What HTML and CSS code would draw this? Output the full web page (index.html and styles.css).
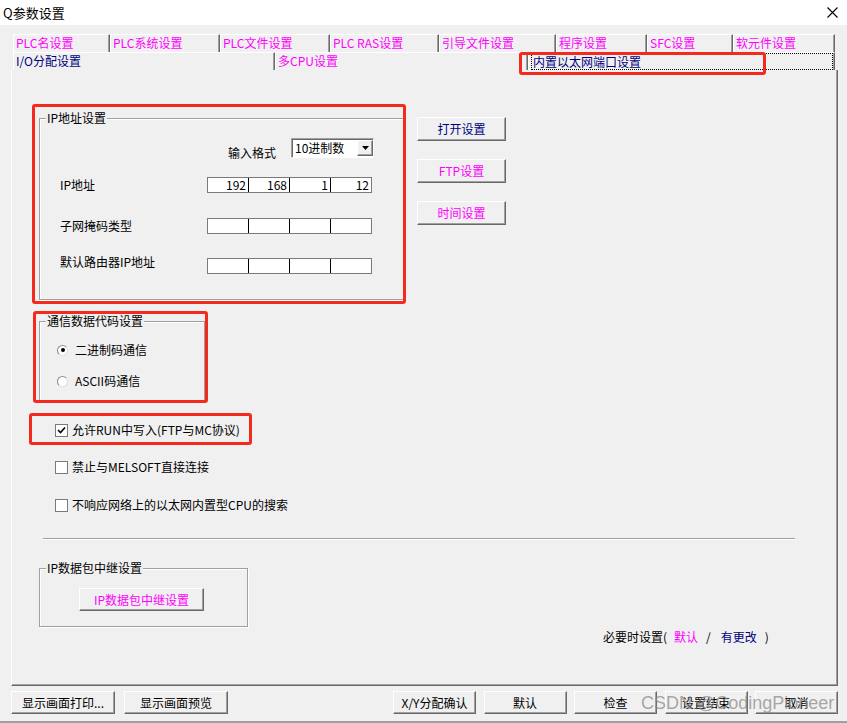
FILE: index.html
```html
<!DOCTYPE html>
<html lang="zh-CN">
<head>
    <meta charset="UTF-8">
    <title>Q参数设置</title>
    <link rel="stylesheet" href="styles.css">
</head>
<body>
<div class="window">
    <div class="titlebar">
        <span class="title">Q参数设置</span>
        <svg class="close" viewBox="0 0 11 11"><path d="M0.5 0.5 L10.5 10.5 M10.5 0.5 L0.5 10.5" stroke="#000" stroke-width="1.1" fill="none"/></svg>
    </div>

    <div class="tabs">
        <div class="tab-row row1">
            <div class="tab pink">PLC名设置</div>
            <div class="tab pink">PLC系统设置</div>
            <div class="tab pink">PLC文件设置</div>
            <div class="tab pink">PLC RAS设置</div>
            <div class="tab pink">引导文件设置</div>
            <div class="tab pink">程序设置</div>
            <div class="tab pink">SFC设置</div>
            <div class="tab pink">软元件设置</div>
        </div>
        <div class="tab-row row2">
            <div class="tab navy">I/O分配设置</div>
            <div class="tab pink">多CPU设置</div>
            <div class="tab navy active"><span class="focus">内置以太网端口设置</span></div>
        </div>
    </div>

    <div class="panel">
        <div class="top-row">
            <div class="group ip-group">
                <div class="group-title">IP地址设置</div>
                <div class="fmt-row">
                    <span class="fmt-label">输入格式</span>
                    <div class="select">
                        <span>10进制数</span>
                        <span class="arrow"><svg width="7" height="4" viewBox="0 0 7 4"><path d="M0 0 H7 L3.5 4 Z" fill="#000"/></svg></span>
                    </div>
                </div>
                <div class="field-row r-ip">
                    <span class="label">IP地址</span>
                    <div class="ip-field">
                        <span class="seg">192</span><span class="seg">168</span><span class="seg">1</span><span class="seg">12</span>
                    </div>
                </div>
                <div class="field-row r-mask">
                    <span class="label">子网掩码类型</span>
                    <div class="ip-field">
                        <span class="seg"></span><span class="seg"></span><span class="seg"></span><span class="seg"></span>
                    </div>
                </div>
                <div class="field-row r-gw">
                    <span class="label raise">默认路由器IP地址</span>
                    <div class="ip-field">
                        <span class="seg"></span><span class="seg"></span><span class="seg"></span><span class="seg"></span>
                    </div>
                </div>
            </div>

            <div class="side-buttons">
                <button class="btn side navy">打开设置</button>
                <button class="btn side pink">FTP设置</button>
                <button class="btn side pink">时间设置</button>
            </div>
        </div>

        <div class="group code-group">
            <div class="group-title">通信数据代码设置</div>
            <div class="radio-row first">
                <span class="radio checked"></span>
                <span>二进制码通信</span>
            </div>
            <div class="radio-row">
                <span class="radio"></span>
                <span>ASCII码通信</span>
            </div>
        </div>

        <div class="check-row c1">
            <span class="checkbox"><svg width="11" height="11" viewBox="0 0 11 11"><path d="M2 5 L4.5 7.5 L9 2.5" stroke="#000" stroke-width="1.6" fill="none"/></svg></span>
            <span>允许RUN中写入(FTP与MC协议)</span>
        </div>
        <div class="check-row c2">
            <span class="checkbox"></span>
            <span>禁止与MELSOFT直接连接</span>
        </div>
        <div class="check-row c3">
            <span class="checkbox"></span>
            <span>不响应网络上的以太网内置型CPU的搜索</span>
        </div>

        <div class="sep"></div>

        <div class="group relay-group">
            <div class="group-title">IP数据包中继设置</div>
            <button class="btn relay-btn pink">IP数据包中继设置</button>
        </div>

        <div class="note">
            必要时设置(<span class="pink note-default">默认</span><span class="note-slash">/</span><span class="navy note-changed">有更改</span><span class="note-close">)</span>
        </div>
    </div>

    <div class="footer">
        <div class="footer-left">
            <button class="btn wide">显示画面打印...</button>
            <button class="btn wide">显示画面预览</button>
        </div>
        <div class="footer-right">
            <button class="btn small">X/Y分配确认</button>
            <button class="btn small">默认</button>
            <button class="btn small">检查</button>
            <button class="btn small">设置结束</button>
            <button class="btn small">取消</button>
        </div>
    </div>

    <!-- 标注红框 -->
    <div class="mark mark-tab"></div>
    <div class="mark mark-ip"></div>
    <div class="mark mark-code"></div>
    <div class="mark mark-check"></div>

    <div class="watermark">CSDN @CodingPioneer</div>
</div>
</body>
</html>
```

FILE: styles.css
```css
* {
    box-sizing: border-box;
}
body {
    margin: 0;
    width: 847px;
    height: 723px;
    overflow: hidden;
    background-color: #f0f0f0;
    font-family: "Noto Sans CJK SC", "Noto Sans", sans-serif;
    font-size: 12px;
    line-height: 14px;
    color: #000;
}
.window {
    position: relative;
    height: 723px;
    border-bottom: 2px solid #a0a0a0;
}
.pink {
    color: #ff00ff;
}
.navy {
    color: #000080;
}

/* 标题栏 */
.titlebar {
    height: 25px;
    background-color: #fff;
    display: flex;
    align-items: center;
    justify-content: space-between;
    padding: 0 9px 0 3px;
}
.titlebar .title {
    font-size: 13px;
}
.close {
    width: 11px;
    height: 11px;
}

/* 选项卡 */
.tabs {
    padding: 9px 0 0 13px;
}
.tab-row {
    display: grid;
    height: 18px;
}
.row1 {
    grid-template-columns: 97px 110px 110px 109px 117px 91px 86px 102px;
}
.row2 {
    grid-template-columns: 262px 253px 307px;
}
.tab {
    border-top: 1px solid #fff;
    border-left: 1px solid #fff;
    border-right: 1px solid #696969;
    box-shadow: inset -1px 0 #a0a0a0;
    padding: 1px 0 0 2px;
    white-space: nowrap;
}
.tab.active {
    padding: 0 1px 0 2px;
}
.focus {
    display: block;
    height: 17px;
    border: 1px dotted #000;
    padding-left: 1px;
    line-height: 15px;
}

/* 主面板 */
.panel {
    margin-left: 11px;
    width: 827px;
    height: 616px;
    padding-top: 48px;
    border-left: 1px solid #fff;
    border-right: 1px solid #696969;
    border-bottom: 1px solid #696969;
    box-shadow: inset -1px -1px #a0a0a0;
}
.top-row {
    display: flex;
    align-items: flex-start;
    margin-left: 27px;
}
.group {
    border: 1px solid #a0a0a0;
    box-shadow: inset 1px 1px #fff, 1px 1px #fff;
}
.group-title {
    margin: -8px 0 0 6px;
    padding: 0 1px;
    width: fit-content;
    background-color: #f0f0f0;
}
.ip-group {
    width: 365px;
    height: 182px;
}
.fmt-row {
    display: flex;
    align-items: flex-end;
    height: 20px;
    margin: 13px 0 0 188px;
}
.fmt-label {
    margin-bottom: -2px;
}
.select {
    margin-left: 15px;
    width: 83px;
    height: 20px;
    display: flex;
    align-items: center;
    justify-content: space-between;
    background-color: #fff;
    border: 1px solid;
    border-color: #a0a0a0 #fff #fff #a0a0a0;
    box-shadow: inset 1px 1px #696969;
    padding: 0 0 0 3px;
}
.arrow {
    width: 16px;
    height: 16px;
    display: flex;
    align-items: center;
    justify-content: center;
    background-color: #f0f0f0;
    border: 1px solid;
    border-color: #fff #696969 #696969 #fff;
    box-shadow: inset -1px -1px #a0a0a0;
}
.field-row {
    display: flex;
    align-items: center;
    margin-left: 20px;
}
.field-row .label {
    width: 147px;
}
.label.raise {
    margin-bottom: 8px;
}
.r-ip {
    margin-top: 19px;
}
.r-mask {
    margin-top: 25px;
}
.r-gw {
    margin-top: 21px;
}
.ip-field {
    display: flex;
    width: 165px;
    height: 16px;
    border: 1px solid #7a7a7a;
    background-color: #fff;
}
.seg {
    width: 41px;
    border-right: 1px solid #000;
    text-align: right;
    padding-right: 2px;
}
.seg:last-child {
    width: 40px;
    border-right: 0;
}

/* 按钮 */
.btn {
    font: inherit;
    color: inherit;
    padding: 0;
    background-color: #f0f0f0;
    border: 1px solid;
    border-color: #fff #696969 #696969 #fff;
    box-shadow: inset -1px -1px #a0a0a0;
    display: flex;
    align-items: center;
    justify-content: center;
    white-space: nowrap;
}
.btn.pink {
    color: #ff00ff;
}
.btn.navy {
    color: #000080;
}
.side-buttons {
    display: flex;
    flex-direction: column;
    gap: 18px;
    margin: -1px 0 0 13px;
}
.side {
    width: 89px;
    height: 24px;
}

/* 通信数据代码 */
.code-group {
    margin: 21px 0 0 27px;
    width: 166px;
    height: 80px;
}
.radio-row {
    display: flex;
    align-items: center;
    gap: 7px;
    height: 14px;
    margin: 17px 0 0 17px;
}
.radio-row.first {
    margin-top: 15px;
}
.radio {
    width: 11px;
    height: 11px;
    border-radius: 50%;
    border: 1px solid;
    border-color: #8a8a8a #e0e0e0 #e0e0e0 #8a8a8a;
    background-color: #fff;
    display: flex;
    align-items: center;
    justify-content: center;
}
.radio.checked::after {
    content: "";
    width: 4px;
    height: 4px;
    border-radius: 50%;
    background-color: #000;
}

/* 复选框 */
.check-row {
    display: flex;
    align-items: center;
    gap: 4px;
    height: 14px;
    margin-left: 43px;
}
.c1 {
    margin-top: 22px;
}
.c2 {
    margin-top: 23px;
}
.c3 {
    margin-top: 24px;
}
.checkbox {
    width: 13px;
    height: 13px;
    border: 1px solid #7a7a7a;
    background-color: #fff;
    display: flex;
    align-items: center;
    justify-content: center;
}
.sep {
    margin: 26px 0 0 31px;
    width: 752px;
    border-top: 1px solid #a0a0a0;
    border-bottom: 1px solid #fff;
}

/* IP数据包中继 */
.relay-group {
    margin: 28px 0 0 27px;
    width: 209px;
    height: 59px;
}
.relay-btn {
    margin: 13px 0 0 39px;
    width: 125px;
    height: 23px;
}
.note {
    margin: 3px 0 0 591px;
    white-space: nowrap;
}
.note-default {
    margin-left: 7px;
}
.note-slash {
    margin-left: 8px;
}
.note-changed {
    margin-left: 10px;
}
.note-close {
    margin-left: 8px;
}

/* 底部按钮 */
.footer {
    display: flex;
    margin: 5px 0 0 11px;
}
.footer-left {
    display: flex;
    gap: 9px;
}
.footer-right {
    display: flex;
    gap: 7.5px;
    margin-left: 165px;
}
.wide {
    width: 104px;
    height: 23px;
}
.small {
    width: 83px;
    height: 23px;
}

/* 标注 */
.mark {
    position: absolute;
    border: 3px solid #f42a1e;
    border-radius: 3px;
}
.mark-tab {
    left: 519px;
    top: 52px;
    width: 247px;
    height: 23px;
}
.mark-ip {
    left: 32px;
    top: 104px;
    width: 374px;
    height: 200px;
}
.mark-code {
    left: 33px;
    top: 311px;
    width: 175px;
    height: 92px;
}
.mark-check {
    left: 29px;
    top: 413px;
    width: 223px;
    height: 32px;
}
.watermark {
    position: absolute;
    left: 641px;
    top: 692px;
    font-family: "Liberation Sans", sans-serif;
    font-size: 18px;
    line-height: 22px;
    color: rgba(140, 140, 140, 0.75);
    white-space: nowrap;
}
```
